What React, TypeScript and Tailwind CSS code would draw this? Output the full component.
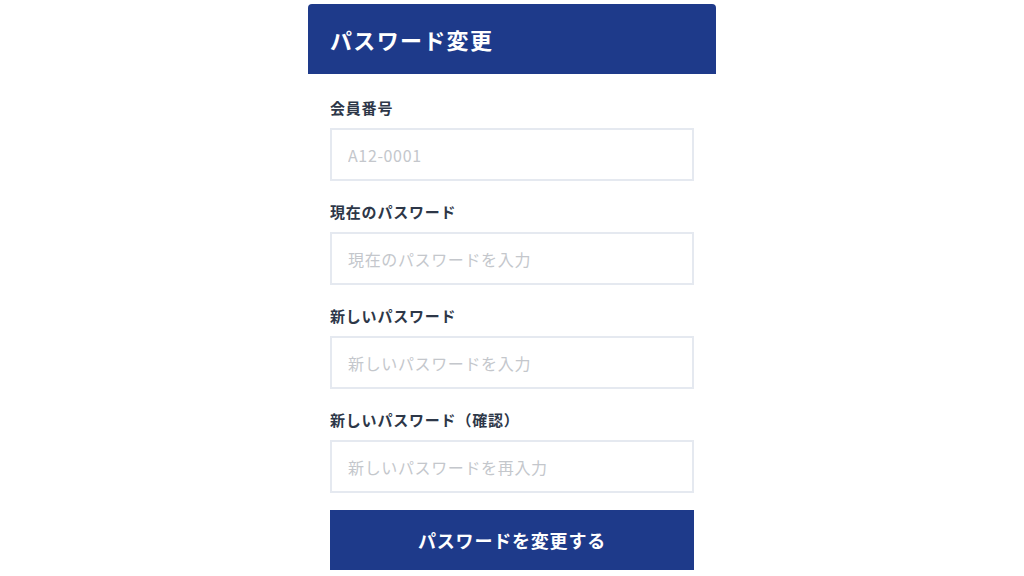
export default function App() {
  const fields = [
    { label: "会員番号", placeholder: "A12-0001" },
    { label: "現在のパスワード", placeholder: "現在のパスワードを入力" },
    { label: "新しいパスワード", placeholder: "新しいパスワードを入力" },
    { label: "新しいパスワード（確認）", placeholder: "新しいパスワードを再入力" },
  ];

  return (
    <div
      className="min-h-screen bg-white pt-[4px] tracking-[0.05em]"
      style={{ fontFamily: '"Noto Sans CJK JP", "Noto Sans", sans-serif' }}
    >
      <div className="mx-auto w-[408px] bg-white">
        <div className="flex h-[70px] items-center rounded-t-[4px] bg-[#1e3a8a] px-[22px]">
          <h1 className="text-[22px] font-bold tracking-[0.06em] text-white">パスワード変更</h1>
        </div>
        <form className="flex flex-col px-[22px] pt-[24px]" onSubmit={(e) => e.preventDefault()}>
          {fields.map((f) => (
            <div key={f.label} className="mb-[21px] flex flex-col gap-[10px]">
              <label className="h-[20px] text-[15px] font-bold leading-[20px] text-[#2d3748]">
                {f.label}
              </label>
              <input
                type="text"
                placeholder={f.placeholder}
                className="h-[53px] w-full border-2 border-[#e5e9f0] bg-white px-[16px] text-[16px] tracking-[0.04em] text-[#2d3748] outline-none placeholder:text-[#c4c7cc]"
              />
            </div>
          ))}
          <button
            type="submit"
            className="-mt-[4px] h-[60px] w-full bg-[#1e3a8a] text-[18px] font-bold text-white"
          >
            パスワードを変更する
          </button>
        </form>
      </div>
    </div>
  );
}
